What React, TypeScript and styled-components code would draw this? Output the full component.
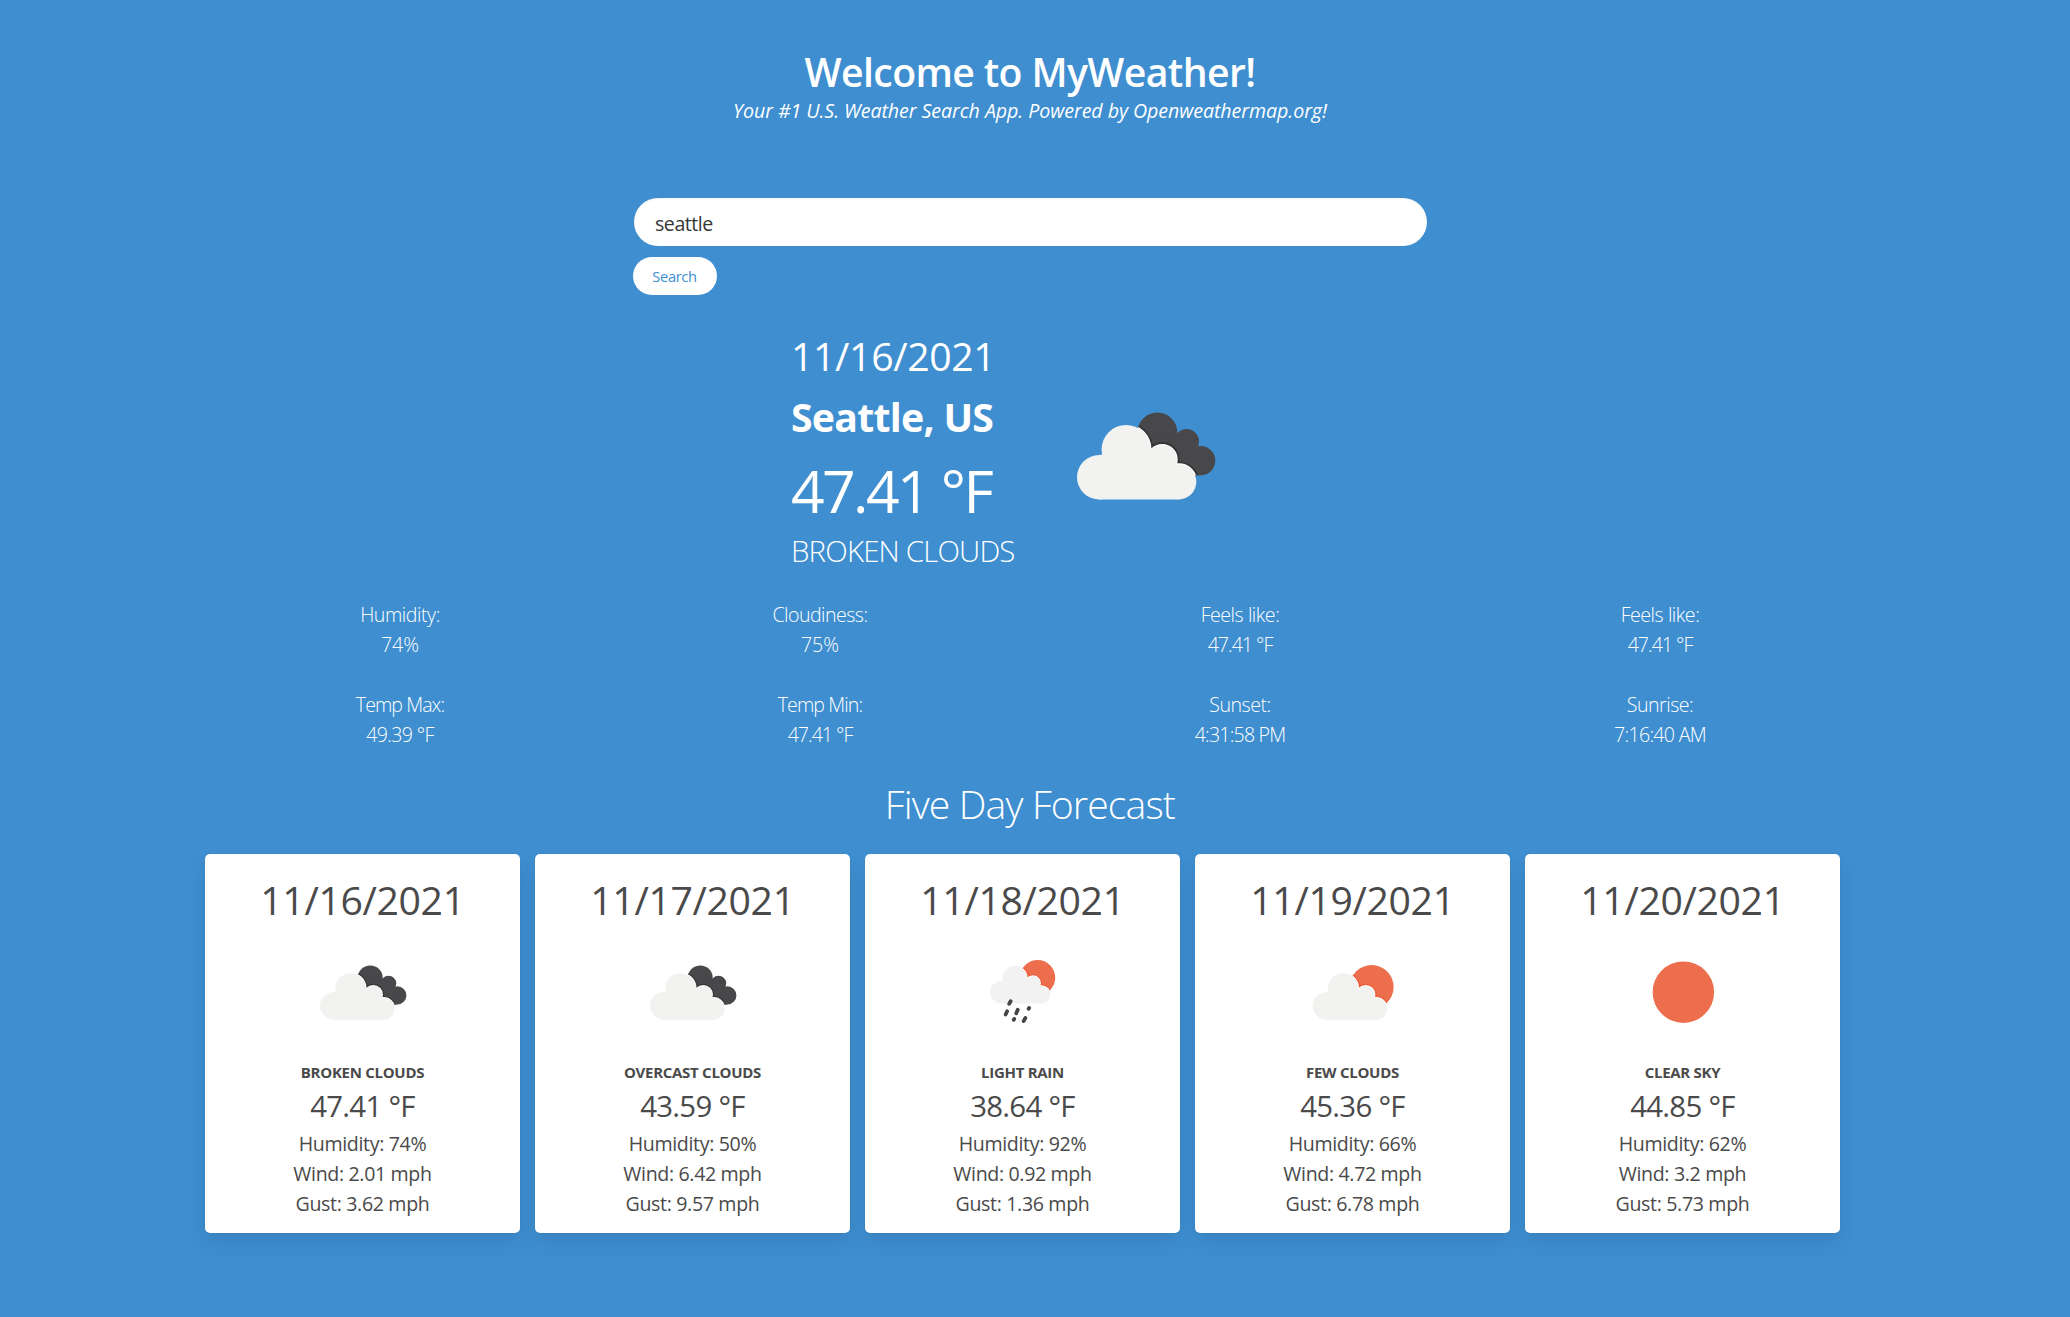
import React, { useState } from "react";
import styled, { createGlobalStyle } from "styled-components";

const BLUE = "#3e8ed0";
const TEXT = "#4a4a4a";

const GlobalStyle = createGlobalStyle`
  *, *::before, *::after { box-sizing: border-box; }
  body {
    margin: 0;
    background: ${BLUE};
    color: #fff;
    font-family: "Open Sans", "Noto Sans", sans-serif;
    font-size: 19.6px;
    line-height: 30px;
  }
  h1, h2, h3, p { margin: 0; font-weight: inherit; }
`;

const Page = styled.main`
  display: flex;
  flex-direction: column;
  align-items: center;
  min-height: 1317px;
  padding: 49px 10px 84px 0;
`;

const Title = styled.h1`
  font-size: 39.2px;
  line-height: 45px;
  font-weight: 600;
  letter-spacing: -0.62px;
`;

const Subtitle = styled.p`
  margin-top: 4px;
  line-height: 25px;
  font-style: italic;
  letter-spacing: -0.05px;
`;

const SearchForm = styled.form`
  display: flex;
  flex-direction: column;
  align-items: flex-start;
  width: 794px;
  margin-top: 75px;
`;

const SearchInput = styled.input`
  width: 793px;
  height: 48px;
  margin-left: 1px;
  padding: 3px 21px 0;
  border: 0;
  border-radius: 24px;
  outline: 0;
  background: #fff;
  box-shadow: inset 0 1px 2px rgba(10, 10, 10, 0.05);
  color: #363636;
  font: inherit;
  letter-spacing: -0.47px;
`;

const SearchButton = styled.button`
  width: 84px;
  height: 38px;
  margin-top: 11px;
  padding: 0 1px 0 0;
  border: 0;
  border-radius: 19px;
  background: #fff;
  color: ${BLUE};
  font-family: inherit;
  font-size: 14.7px;
  letter-spacing: -0.35px;
`;

const Current = styled.section`
  display: flex;
  align-items: flex-start;
  gap: 31px;
  width: 480px;
  margin-top: 31px;
`;

const CurrentText = styled.div`
  width: 224px;
  padding-left: 1px;
  white-space: nowrap;
`;

const DateText = styled.p`
  font-size: 39.2px;
  line-height: 60px;
  letter-spacing: -0.36px;
`;

const City = styled.h2`
  margin-top: 8px;
  font-size: 39.2px;
  line-height: 45px;
  font-weight: 700;
  letter-spacing: -0.72px;
`;

const CurrentTemp = styled.p`
  margin-top: 14px;
  font-size: 58.8px;
  line-height: 74px;
  letter-spacing: -2.56px;
`;

const CurrentSummary = styled.p`
  margin-top: 4px;
  font-size: 29.4px;
  line-height: 40px;
  font-weight: 300;
  letter-spacing: -0.82px;
`;

const IconSvg = styled.svg<{ $size: number; $top?: number }>`
  display: block;
  flex: none;
  width: ${(p) => p.$size}px;
  height: ${(p) => p.$size}px;
  margin-top: ${(p) => p.$top ?? 0}px;
`;

const Stats = styled.section`
  display: grid;
  grid-template-columns: repeat(4, 420px);
  row-gap: 30px;
  margin-top: 29px;
  text-align: center;
  font-weight: 300;
`;

const StatLine = styled.p<{ $spacing: number }>`
  letter-spacing: ${(p) => p.$spacing}px;
`;

const ForecastTitle = styled.h2`
  margin-top: 31px;
  font-size: 39.2px;
  line-height: 45px;
  font-weight: 300;
  letter-spacing: -0.87px;
`;

const Forecast = styled.section`
  display: grid;
  grid-template-columns: repeat(5, 315px);
  gap: 15px;
  width: 1650px;
  margin-top: 28px;
`;

const Card = styled.article`
  display: flex;
  flex-direction: column;
  align-items: center;
  height: 379px;
  padding-top: 16px;
  border-radius: 5px;
  background: #fff;
  box-shadow: 0 10px 20px -2.5px rgba(10, 10, 10, 0.1),
    0 0 0 1px rgba(10, 10, 10, 0.02);
  color: ${TEXT};
`;

const CardSummary = styled.h3`
  margin-top: 5px;
  font-size: 15px;
  line-height: 25px;
  font-weight: 700;
  letter-spacing: -0.28px;
`;

const CardTemp = styled.p`
  margin: 1px 0 3px;
  font-size: 29.4px;
  line-height: 40px;
  letter-spacing: -0.72px;
`;

const CardLine = styled.p`
  letter-spacing: -0.35px;
`;

type IconKind = "clouds" | "rain" | "few" | "clear";

const CloudShape = () => (
  <>
    <circle cx="27.1" cy="60.6" r="11.1" />
    <circle cx="40.5" cy="46.7" r="12.2" />
    <circle cx="58.6" cy="51.7" r="7.2" />
    <circle cx="66.9" cy="62.95" r="8.75" />
    <path d="M27 49.6L40 46L58.6 50L67 60V71.7H27Z" />
  </>
);

/* Front cloud plus the soft rim it casts on whatever is behind it. */
const FrontCloud = ({
  clip,
  shade,
  fill,
  transform,
}: {
  clip: string;
  shade: string;
  fill: string;
  transform?: string;
}) => (
  <>
    <g clipPath={`url(#${clip})`}>
      <g transform={transform} fill={shade} stroke={shade} strokeWidth="3">
        <CloudShape />
      </g>
      <g transform={transform} fill="#fff" stroke="#fff" strokeWidth="1.1">
        <CloudShape />
      </g>
    </g>
    <g transform={transform} fill={fill}>
      <CloudShape />
    </g>
  </>
);

const BackCloud = () => (
  <>
    <circle cx="56.2" cy="38.3" r="10" />
    <circle cx="70.8" cy="42.7" r="6.2" />
    <circle cx="77.8" cy="52.3" r="7.35" />
    <path d="M56 38L71 40L78 49V59.65H58Z" />
  </>
);

/* Clip-path children have to be direct shapes, so the back cloud is repeated as one path. */
const BACK_CLOUD_PATH =
  "M46.2 38.3a10 10 0 1 0 20 0a10 10 0 1 0 -20 0Z" +
  "M64.6 42.7a6.2 6.2 0 1 0 12.4 0a6.2 6.2 0 1 0 -12.4 0Z" +
  "M70.45 52.3a7.35 7.35 0 1 0 14.7 0a7.35 7.35 0 1 0 -14.7 0Z" +
  "M56 38V59.65H78V49L71 40Z";

const WeatherIcon = ({ kind, size, top }: { kind: IconKind; size: number; top?: number }) => (
  <IconSvg viewBox="0 0 100 100" $size={size} $top={top} aria-hidden>
    {kind === "clouds" && (
      <>
        <clipPath id="back-cloud">
          <path d={BACK_CLOUD_PATH} transform="translate(0 0)" clipRule="nonzero" />
          <circle cx="56.2" cy="38.3" r="10" />
          <circle cx="70.8" cy="42.7" r="6.2" />
          <circle cx="77.8" cy="52.3" r="7.35" />
        </clipPath>
        <g fill="#48484a">
          <BackCloud />
        </g>
        <FrontCloud clip="back-cloud" shade="#363638" fill="#f2f2f0" />
      </>
    )}
    {kind === "few" && (
      <>
        <clipPath id="few-sun">
          <circle cx="65.3" cy="45.6" r="17.6" />
        </clipPath>
        <circle cx="65.3" cy="45.6" r="17.6" fill="#ec6e4c" />
        <FrontCloud clip="few-sun" shade="#ea5c38" fill="#f2f2f0" transform="translate(2 0)" />
      </>
    )}
    {kind === "rain" && (
      <>
        <clipPath id="rain-sun">
          <circle cx="62.1" cy="38.1" r="14.1" />
        </clipPath>
        <circle cx="62.1" cy="38.1" r="14.1" fill="#ec6e4c" />
        <FrontCloud
          clip="rain-sun"
          shade="#ea5230"
          fill="#f2f2f2"
          transform="translate(11.06 0.7) scale(0.809)"
        />
        <path
          d="M39.3 59.1L40.5 57M36.5 67.6L37.7 65M45 66.6L46.2 63.8M54.9 63.1L55.3 62.3M43 71.8L43.4 71.1M50.9 72.9L52.3 70.4"
          stroke="#444446"
          strokeWidth="3"
          strokeLinecap="round"
          fill="none"
        />
      </>
    )}
    {kind === "clear" && <circle cx="50.7" cy="49.7" r="24.6" fill="#ec6e4c" />}
  </IconSvg>
);

const stats = [
  { label: "Humidity:", value: "74%", ls: -0.44, vs: 0 },
  { label: "Cloudiness:", value: "75%", ls: -0.53, vs: 0 },
  { label: "Feels like:", value: "47.41 °F", ls: -0.46, vs: -1 },
  { label: "Feels like:", value: "47.41 °F", ls: -0.46, vs: -1 },
  { label: "Temp Max:", value: "49.39 °F", ls: -0.95, vs: -0.66 },
  { label: "Temp Min:", value: "47.41 °F", ls: -0.9, vs: -1 },
  { label: "Sunset:", value: "4:31:58 PM", ls: -0.5, vs: -0.8 },
  { label: "Sunrise:", value: "7:16:40 AM", ls: -0.5, vs: -0.72 },
];

const days: {
  date: string;
  icon: IconKind;
  summary: string;
  temp: string;
  humidity: string;
  wind: string;
  gust: string;
}[] = [
  { date: "11/16/2021", icon: "clouds", summary: "BROKEN CLOUDS", temp: "47.41", humidity: "74", wind: "2.01", gust: "3.62" },
  { date: "11/17/2021", icon: "clouds", summary: "OVERCAST CLOUDS", temp: "43.59", humidity: "50", wind: "6.42", gust: "9.57" },
  { date: "11/18/2021", icon: "rain", summary: "LIGHT RAIN", temp: "38.64", humidity: "92", wind: "0.92", gust: "1.36" },
  { date: "11/19/2021", icon: "few", summary: "FEW CLOUDS", temp: "45.36", humidity: "66", wind: "4.72", gust: "6.78" },
  { date: "11/20/2021", icon: "clear", summary: "CLEAR SKY", temp: "44.85", humidity: "62", wind: "3.2", gust: "5.73" },
];

export default function App() {
  const [query, setQuery] = useState("seattle");
  return (
    <>
      <GlobalStyle />
      <Page>
        <Title>Welcome to MyWeather!</Title>
        <Subtitle>Your #1 U.S. Weather Search App. Powered by Openweathermap.org!</Subtitle>

        <SearchForm onSubmit={(e) => e.preventDefault()}>
          <SearchInput value={query} onChange={(e) => setQuery(e.target.value)} />
          <SearchButton type="submit">Search</SearchButton>
        </SearchForm>

        <Current>
          <CurrentText>
            <DateText>11/16/2021</DateText>
            <City>Seattle, US</City>
            <CurrentTemp>47.41 °F</CurrentTemp>
            <CurrentSummary>BROKEN CLOUDS</CurrentSummary>
          </CurrentText>
          <WeatherIcon kind="clouds" size={200} top={30} />
        </Current>

        <Stats>
          {stats.map((s, i) => (
            <div key={i}>
              <StatLine $spacing={s.ls}>{s.label}</StatLine>
              <StatLine $spacing={s.vs}>{s.value}</StatLine>
            </div>
          ))}
        </Stats>

        <ForecastTitle>Five Day Forecast</ForecastTitle>
        <Forecast>
          {days.map((d) => (
            <Card key={d.date}>
              <DateText>{d.date}</DateText>
              <WeatherIcon kind={d.icon} size={125} />
              <CardSummary>{d.summary}</CardSummary>
              <CardTemp>{d.temp} °F</CardTemp>
              <CardLine>Humidity: {d.humidity}%</CardLine>
              <CardLine>Wind: {d.wind} mph</CardLine>
              <CardLine>Gust: {d.gust} mph</CardLine>
            </Card>
          ))}
        </Forecast>
      </Page>
    </>
  );
}
